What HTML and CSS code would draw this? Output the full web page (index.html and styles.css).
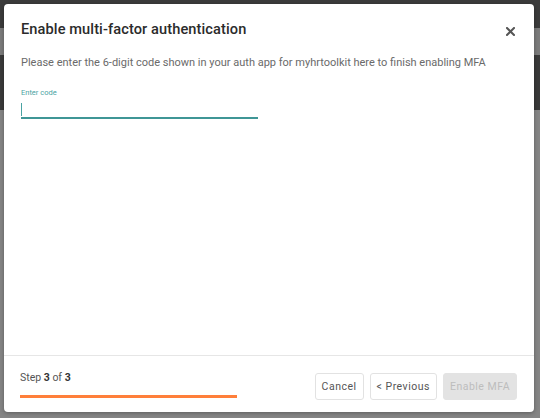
FILE: index.html
```html
<!DOCTYPE html>
<html lang="en">
<head>
    <meta charset="UTF-8">
    <meta name="viewport" content="width=device-width, initial-scale=1.0">
    <title>Enable MFA</title>
    <link rel="stylesheet" href="styles.css">
</head>
<body>

<div class="backdrop">
    <div class="modal">
        <div class="modal-header">
            <h1>Enable multi-factor authentication</h1>
            <button class="close" aria-label="Close">
                <svg width="9" height="9" viewBox="0 0 9 9"><path d="M1 1L8 8M8 1L1 8" stroke="#555" stroke-width="2" stroke-linecap="square"/></svg>
            </button>
        </div>
        <div class="modal-body">
            <p class="intro">Please enter the 6-digit code shown in your auth app for myhrtoolkit here to finish enabling MFA</p>
            <div class="field">
                <label for="code">Enter code</label>
                <div class="input"><span class="caret"></span></div>
            </div>
        </div>
        <div class="modal-footer">
            <div class="steps">
                <div class="step-text">Step <b>3</b> of <b>3</b></div>
                <div class="progress"></div>
            </div>
            <div class="actions">
                <button class="btn">Cancel</button>
                <button class="btn">&lt; Previous</button>
                <button class="btn btn-disabled" disabled>Enable MFA</button>
            </div>
        </div>
    </div>
</div>

</body>
</html>
```

FILE: styles.css
```css
body { margin: 0; font-family: Roboto, "Liberation Sans", sans-serif; }
.backdrop {
    height: 418px; padding: 4px 6px 0 4px; box-sizing: border-box;
    background: linear-gradient(#3b3b3b 0, #3b3b3b 28px, #7b7b7b 28px, #7b7b7b 55px, #3a3a3a 55px, #3a3a3a 110px, #858585 110px);
}
.modal { height: 408px; background: #fff; border-radius: 4px; display: flex; flex-direction: column; box-shadow: 0 1px 4px rgba(0,0,0,0.3); }
.modal-header { display: flex; justify-content: space-between; align-items: center; padding: 16px 19px 0 17px; }
.modal-header h1 { margin: 0; font-size: 14.6px; font-weight: 500; color: #2b2b2b; letter-spacing: 0.1px; }
.close { border: none; background: none; padding: 0; margin-top: 5px; width: 9px; height: 9px; cursor: pointer; }
.close svg { display: block; }
.modal-body { flex: 1; padding: 0 17px; }
.intro { margin: 18px 0 0 0; font-size: 11px; color: #6a6a6a; }
.field { margin-top: 19px; }
.field label { display: block; font-size: 7.5px; color: #4aa3a3; }
.input { width: 237px; height: 14px; margin-top: 6px; border-bottom: 2px solid #3f9696; }
.caret { display: block; width: 1px; height: 13px; margin-top: 1px; background: #4aa3a3; }
.modal-footer { height: 56px; border-top: 1px solid #e6e6e6; display: flex; justify-content: space-between; align-items: center; padding: 0 17px 0 16px; }
.step-text { font-size: 10.5px; color: #555; }
.step-text b { color: #333; }
.progress { width: 217px; height: 3px; background: #ff7f3a; margin-top: 11px; }
.actions { display: flex; gap: 6px; margin-top: 4px; }
.btn { height: 27px; padding: 0 6px; font-family: Roboto, "Liberation Sans", sans-serif; font-size: 10.5px; letter-spacing: 0.5px; color: #555; background: #fff; border: 1px solid #e2e2e2; border-radius: 3px; cursor: pointer; }
.btn-disabled { background: #e3e3e3; color: #bdbdbd; border-color: #e3e3e3; cursor: default; }
```
